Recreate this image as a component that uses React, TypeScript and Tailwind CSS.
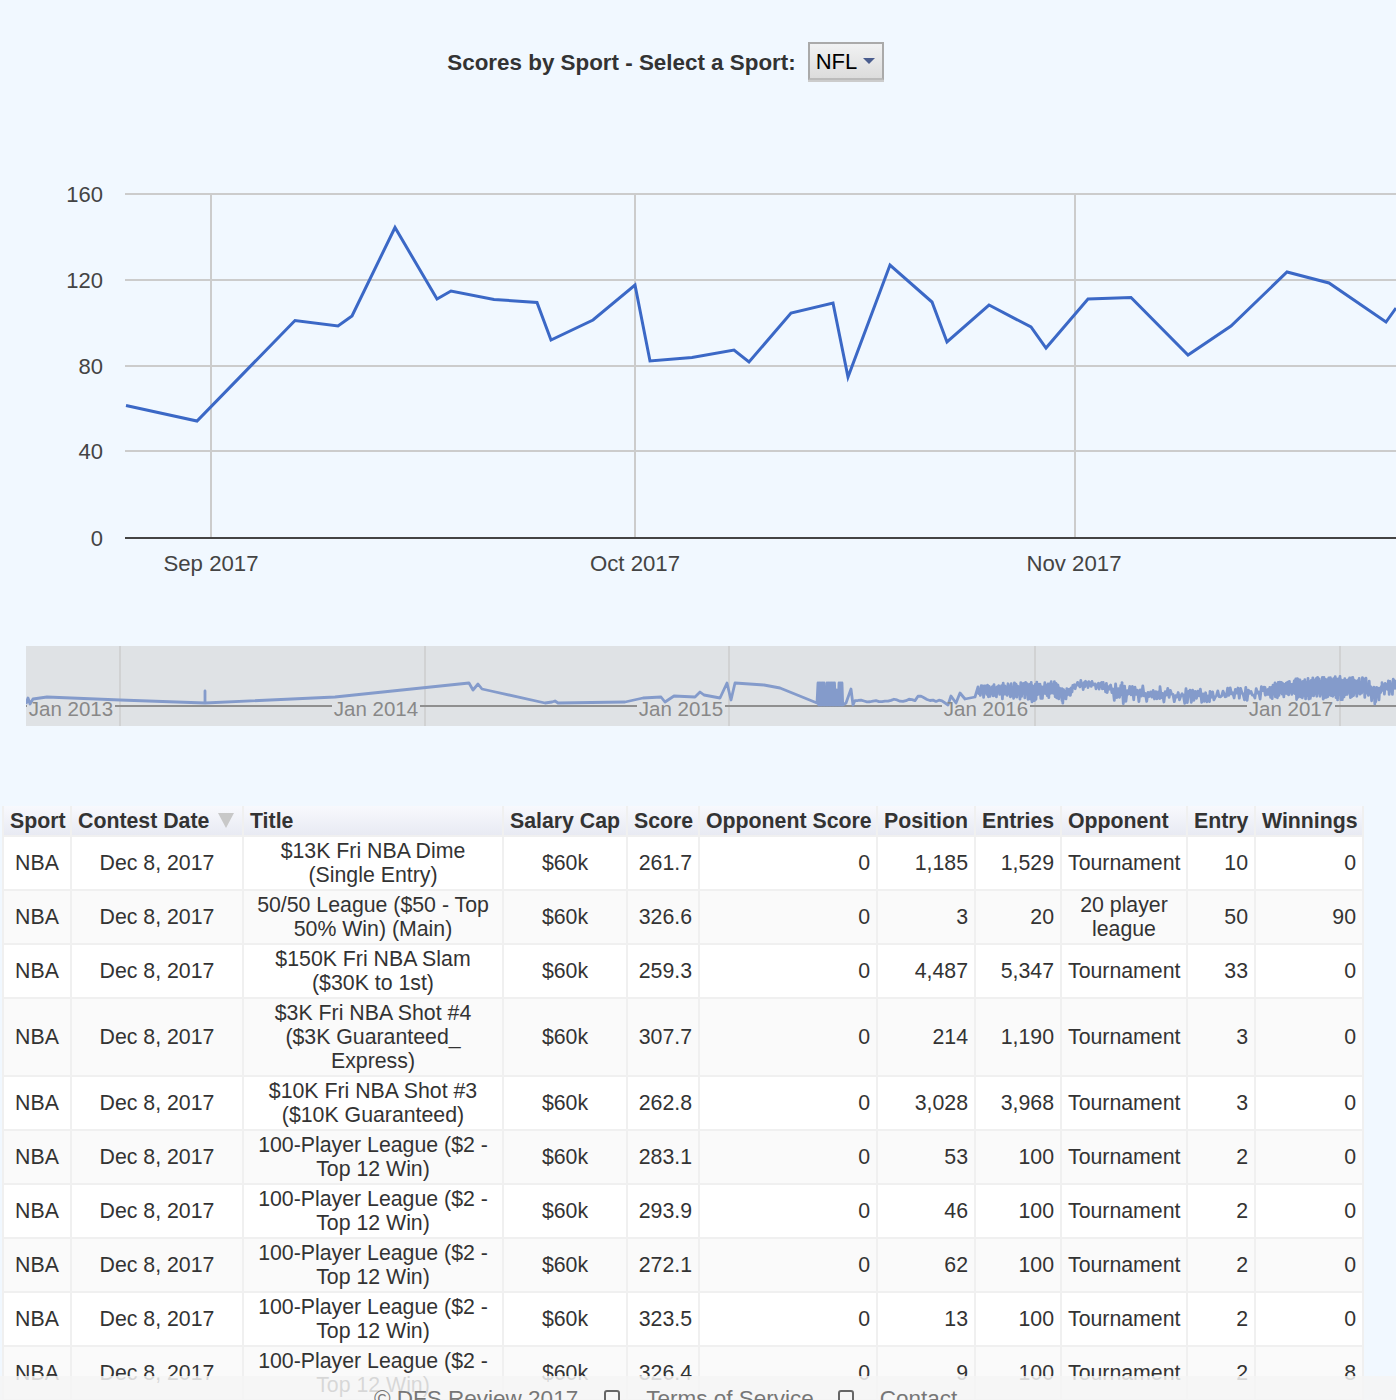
const price = [
  [126, 405.5], [197, 421], [295, 320.5], [338, 326], [352, 316], [395, 227.5], [437, 299], [451, 291], [494, 299.5], [537, 302.5],
  [551, 340], [593, 320], [635, 285], [650, 361], [692, 357.5], [734, 350], [749, 362], [791, 313], [833, 303], [848, 377],
  [890, 265], [932, 302], [947, 342], [989, 305], [1031, 327], [1046, 348], [1088, 299], [1131, 297.5], [1188, 355], [1231, 326],
  [1287, 272], [1329, 283], [1386, 322], [1396, 308],
]

const yAxis = [
  { label: "160", y: 194 },
  { label: "120", y: 280 },
  { label: "80", y: 366 },
  { label: "40", y: 451 },
  { label: "0", y: 538 },
]

const rows = [
  ["$13K Fri NBA Dime (Single Entry)", "261.7", "1,185", "1,529", "Tournament", "10", "0"],
  ["50/50 League ($50 - Top 50% Win) (Main)", "326.6", "3", "20", "20 player league", "50", "90"],
  ["$150K Fri NBA Slam ($30K to 1st)", "259.3", "4,487", "5,347", "Tournament", "33", "0"],
  ["$3K Fri NBA Shot #4 ($3K Guaranteed_ Express)", "307.7", "214", "1,190", "Tournament", "3", "0"],
  ["$10K Fri NBA Shot #3 ($10K Guaranteed)", "262.8", "3,028", "3,968", "Tournament", "3", "0"],
  ["100-Player League ($2 - Top 12 Win)", "283.1", "53", "100", "Tournament", "2", "0"],
  ["100-Player League ($2 - Top 12 Win)", "293.9", "46", "100", "Tournament", "2", "0"],
  ["100-Player League ($2 - Top 12 Win)", "272.1", "62", "100", "Tournament", "2", "0"],
  ["100-Player League ($2 - Top 12 Win)", "323.5", "13", "100", "Tournament", "2", "0"],
  ["100-Player League ($2 - Top 12 Win)", "326.4", "9", "100", "Tournament", "2", "8"],
]

// x, top, bottom of the noisy band in the overview
const band = [
  [978, 686, 698], [1000, 683, 699], [1028, 682, 700], [1032, 682, 703], [1040, 682, 699], [1058, 681, 700], [1062, 688, 705], [1068, 686, 697],
  [1076, 680, 690], [1100, 681, 691], [1108, 684, 696], [1113, 682, 706], [1122, 682, 704], [1135, 684, 702], [1160, 686, 702],
  [1190, 688, 704], [1210, 690, 706], [1225, 688, 702], [1265, 686, 700], [1275, 682, 698], [1300, 678, 700], [1340, 676, 700],
  [1366, 678, 698], [1375, 686, 705], [1382, 682, 696], [1396, 678, 694],
]

const rand = (n: number) => {
  const v = Math.sin(n * 12.9898) * 43758.5453
  return v - Math.floor(v)
}

const overview = () => {
  const out: number[][] = [
    [26, 704], [28, 698], [30, 704], [33, 699], [47, 697], [120, 700], [205, 703], [205, 691], [205, 703], [335, 697], [469, 683],
    [473, 690], [478, 684], [482, 689], [491, 691], [545, 703], [552, 702], [555, 701], [558, 703], [625, 702], [643, 698], [661, 697],
    [665, 702], [674, 696], [695, 697], [700, 692], [704, 695], [720, 698], [727, 683], [731, 700], [735, 683], [764, 685], [780, 688],
    [817, 703],
  ]
  for (let x = 818; x < 843; x += 1.5) {
    out.push([x, rand(x) > 0.8 ? 690 : 683])
    out.push([x + 0.7, 705])
  }
  out.push([846, 703], [851, 689], [853, 705])
  for (let x = 855; x < 945; x += 3) {
    out.push([x, 702 - rand(x) * 3 - (x > 915 && x < 925 ? 3 : 0)])
  }
  out.push([948, 705], [951, 696], [956, 703], [960, 693], [965, 699], [975, 697])
  for (let s = 0; s < band.length - 1; s++) {
    const [x0, t0, b0] = band[s]
    const [x1, t1, b1] = band[s + 1]
    // the middle years are sparser than the two ends
    const sparse = x0 >= 1108 && x0 < 1265
    const step = sparse ? 2.6 : 1.6
    for (let x = x0; x < x1; x += step) {
      const f = (x - x0) / (x1 - x0)
      out.push([x, t0 + (t1 - t0) * f + rand(x) * (sparse ? 9 : 5)])
      out.push([x + step / 2, b0 + (b1 - b0) * f - rand(x + 3) * (sparse ? 10 : 7)])
    }
  }
  return out.map((p) => p.join(",")).join(" ")
}

const SVGText = "font-['Liberation_Sans',Arial,sans-serif]"

function Chart() {
  return (
    <svg viewBox="0 140 1396 450" className={`block w-full h-[450px] ${SVGText}`}>
      {yAxis.slice(0, 4).map((t) => (
        <line key={t.y} x1="125" x2="1396" y1={t.y} y2={t.y} stroke="#cccccc" strokeWidth="2" />
      ))}
      {[211, 635, 1075].map((x) => (
        <line key={x} x1={x} x2={x} y1="194" y2="538" stroke="#cccccc" strokeWidth="2" />
      ))}
      <line x1="125" x2="1396" y1="538" y2="538" stroke="#444444" strokeWidth="2" />
      <polyline
        points={price.map((p) => p.join(",")).join(" ")}
        fill="none"
        stroke="#3b68c6"
        strokeWidth="3"
        strokeLinejoin="miter"
      />
      {yAxis.map((t) => (
        <text key={t.label} x="103" y={t.y + 8} textAnchor="end" fontSize="22" fill="#444444">{t.label}</text>
      ))}
      <text x="211" y="571" textAnchor="middle" fontSize="22.2" fill="#444444">Sep 2017</text>
      <text x="635" y="571" textAnchor="middle" fontSize="22.2" fill="#444444">Oct 2017</text>
      <text x="1074" y="571" textAnchor="middle" fontSize="22.2" fill="#444444">Nov 2017</text>
    </svg>
  )
}

function Overview() {
  const labels = [
    { x: 71, t: "Jan 2013" },
    { x: 376, t: "Jan 2014" },
    { x: 681, t: "Jan 2015" },
    { x: 986, t: "Jan 2016" },
    { x: 1291, t: "Jan 2017" },
  ]
  return (
    <svg viewBox="26 646 1370 80" className={`block w-[1370px] h-20 ml-[26px] bg-[#dfe2e5] ${SVGText}`}>
      {[120, 425, 729, 1035, 1340].map((x) => (
        <line key={x} x1={x} x2={x} y1="646" y2="726" stroke="#cccccc" strokeWidth="1.5" />
      ))}
      <line x1="26" x2="1396" y1="706" y2="706" stroke="#8f8f8f" strokeWidth="2" />
      {labels.map((l) => (
        <rect key={l.t} x={l.x - 44} y="697" width="88" height="20" fill="#dfe2e5" />
      ))}
      <polyline points={overview()} fill="none" stroke="#849bcb" strokeWidth="2.8" strokeLinejoin="round" />
      {labels.map((l) => (
        <text key={l.t} x={l.x} y="716" textAnchor="middle" fontSize="20.5" fill="#888888">{l.t}</text>
      ))}
    </svg>
  )
}

export default function App() {
  const head = "border-x-2 border-[#f0f0f0] px-[6px] h-[30px] text-left font-bold text-[#333] whitespace-nowrap bg-gradient-to-b from-[#f8f9fd] to-[#e8eaf3]"
  const cell = "border-2 border-[#f0f0f0] px-[6px] py-[2px]"
  return (
    <div className="relative h-[1400px] overflow-hidden bg-[#f1f8ff] font-['Liberation_Sans',Arial,sans-serif] text-[#333]">
      <div className="flex items-center justify-center gap-[12px] pt-[42px] pr-[65px]">
        <span className="pt-[3px] text-[22.4px] font-bold">Scores by Sport - Select a Sport:</span>
        <button className="flex items-center h-[38px] w-[76px] pl-[6px] border-2 border-[#aaa] border-b-[#bbb] bg-gradient-to-b from-[#f1f2f3] to-[#dcdcdc] text-[22px] text-black shadow-[0_2px_0_#ccc]">
          NFL
          <span className="ml-[6px] border-x-[6px] border-t-[6px] border-x-transparent border-t-[#4a5d8e]" />
        </button>
      </div>
      <div className="mt-[60px]">
        <Chart />
      </div>
      <div className="mt-[56px]">
        <Overview />
      </div>
      <table className="mt-[80px] ml-[2px] w-[1360px] table-fixed border-collapse text-[21.3px] leading-[24px]">
        <colgroup>
          {[68, 172, 260, 124, 72, 178, 98, 86, 126, 68, 108].map((w, i) => (
            <col key={i} style={{ width: w }} />
          ))}
        </colgroup>
        <thead>
          <tr>
            <th className={head}>Sport</th>
            <th className={head}>
              <span className="flex items-center">
                Contest Date
                <span className="ml-[9px] border-x-[8px] border-t-[15px] border-x-transparent border-t-[#c8c8c8]" />
              </span>
            </th>
            <th className={head}>Title</th>
            <th className={head}>Salary Cap</th>
            <th className={head}>Score</th>
            <th className={head}>Opponent Score</th>
            <th className={head}>Position</th>
            <th className={head}>Entries</th>
            <th className={head}>Opponent</th>
            <th className={head}>Entry</th>
            <th className={head}>Winnings</th>
          </tr>
        </thead>
        <tbody>
          {rows.map((r, i) => (
            <tr key={i} className={i % 2 === 0 ? "bg-white" : "bg-[#fafafa]"}>
              <td className={`${cell} text-center`}>NBA</td>
              <td className={`${cell} text-center`}>Dec 8, 2017</td>
              <td className={`${cell} text-center`}>{r[0]}</td>
              <td className={`${cell} text-center`}>$60k</td>
              <td className={`${cell} text-right`}>{r[1]}</td>
              <td className={`${cell} text-right`}>0</td>
              <td className={`${cell} text-right`}>{r[2]}</td>
              <td className={`${cell} text-right`}>{r[3]}</td>
              <td className={`${cell} text-center`}>{r[4]}</td>
              <td className={`${cell} text-right`}>{r[5]}</td>
              <td className={`${cell} text-right`}>{r[6]}</td>
            </tr>
          ))}
        </tbody>
      </table>
      <div className="absolute left-0 right-0 bottom-0 h-[24px] bg-[#f5f5f5]/85 pt-[11px] pl-[374px] text-[22.5px] leading-[24px] text-[#777] flex items-start whitespace-nowrap">
        <span>© DFS Review 2017</span>
        <span className="ml-[26px] mr-[26px] mt-[3px] h-[20px] w-[16px] rounded-[3px] border-2 border-[#666]" />
        <span>Terms of Service</span>
        <span className="ml-[24px] mr-[26px] mt-[3px] h-[20px] w-[16px] rounded-[3px] border-2 border-[#666]" />
        <span>Contact</span>
      </div>
    </div>
  )
}
